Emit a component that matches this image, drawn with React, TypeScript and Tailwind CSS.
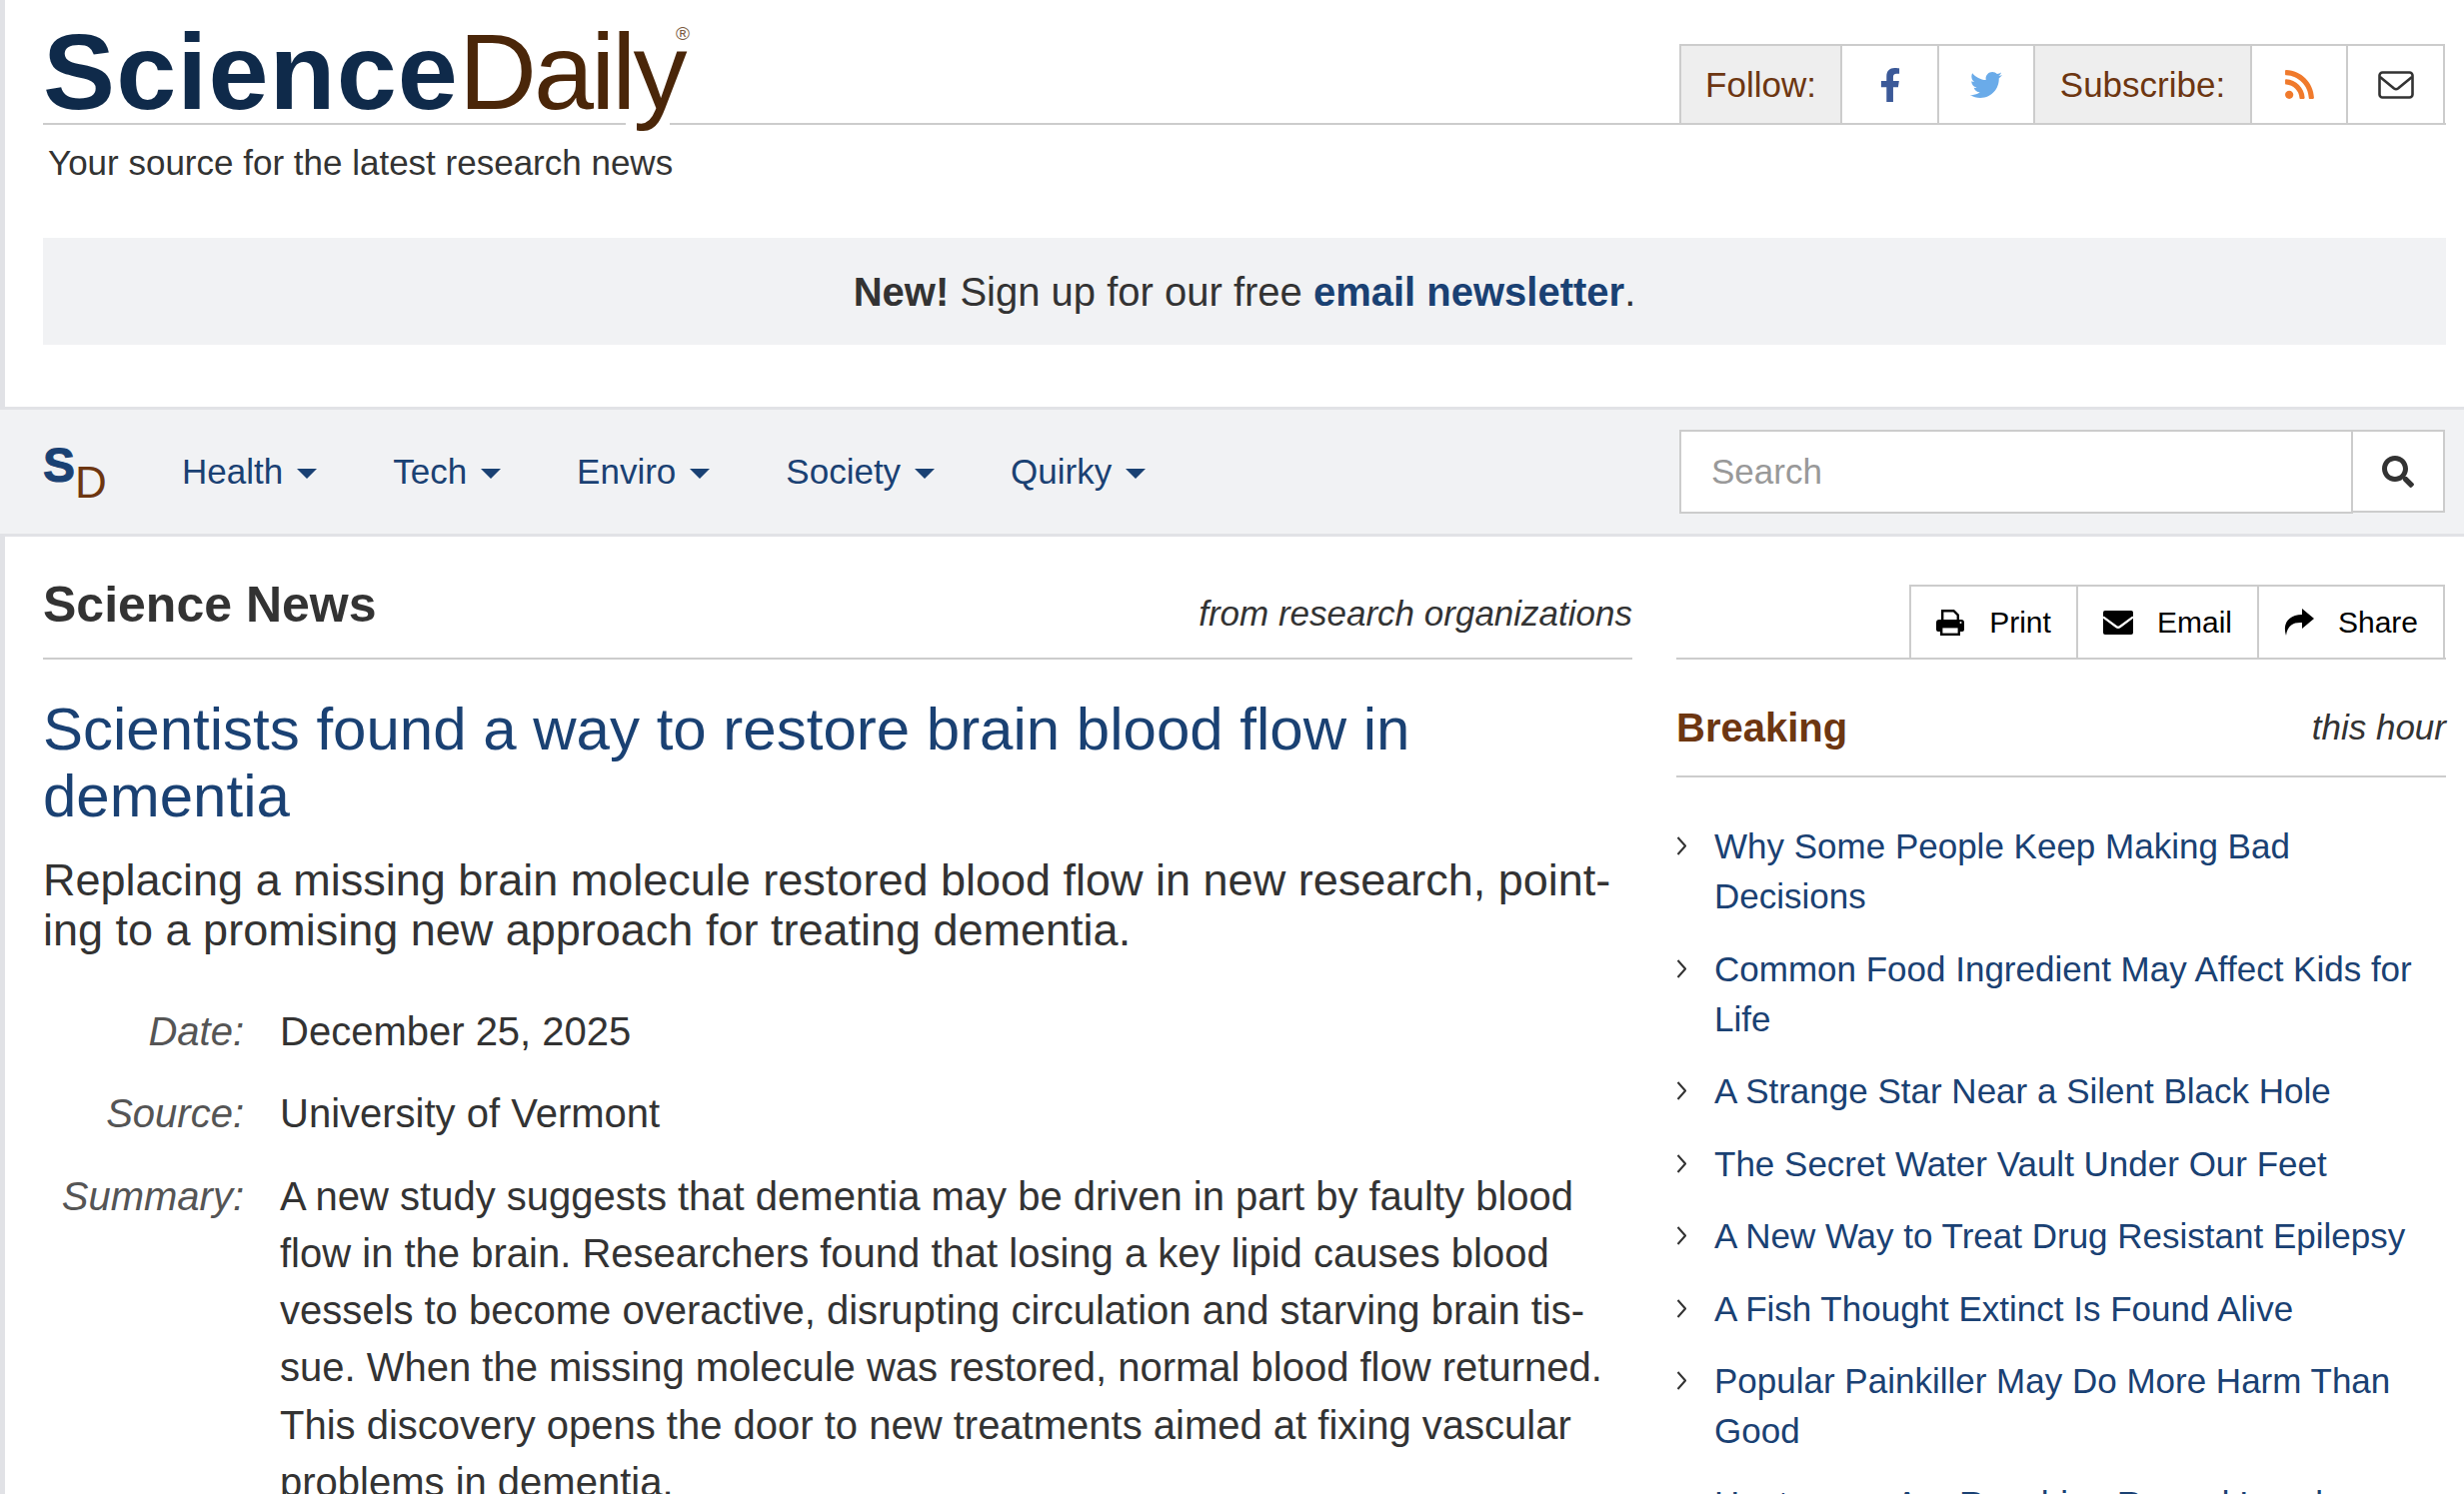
import React from "react";
import { FaFacebookF, FaTwitter, FaRss, FaSearch } from "react-icons/fa";

const navItems = ["Health", "Tech", "Enviro", "Society", "Quirky"];

const breaking = [
  "Why Some People Keep Making Bad Decisions",
  "Common Food Ingredient May Affect Kids for Life",
  "A Strange Star Near a Silent Black Hole",
  "The Secret Water Vault Under Our Feet",
  "A New Way to Treat Drug Resistant Epilepsy",
  "A Fish Thought Extinct Is Found Alive",
  "Popular Painkiller May Do More Harm Than Good",
  "Heatwaves Are Reaching Record Levels",
];

const MailOutline = () => (
  <svg viewBox="0 0 36 28" className="h-[28px] w-[36px]" fill="none" stroke="#333" strokeWidth="2.6" strokeLinejoin="round">
    <rect x="1.5" y="1.5" width="33" height="25" rx="3" />
    <path d="M2 6l14 11.5q2 1.5 4 0L34 6" />
  </svg>
);

const MailSolid = () => (
  <svg viewBox="0 0 30 24" className="h-[24px] w-[30px]">
    <rect width="30" height="24" rx="2" fill="currentColor" />
    <path d="M0 6.5l13 9.5q2 1.5 4 0l13-9.5" fill="none" stroke="#fff" strokeWidth="2.2" />
  </svg>
);

const PrintIcon = () => (
  <svg viewBox="0 0 28 26" className="h-[26px] w-[28px]">
    <path d="M6.2 11V1.2h11.3l4.3 4.3V11" fill="none" stroke="currentColor" strokeWidth="2.4" />
    <path d="M3 10h22a3 3 0 013 3v7a2 2 0 01-2 2h-2v-5H4v5H2a2 2 0 01-2-2v-7a3 3 0 013-3z" fill="currentColor" />
    <rect x="5.2" y="17.2" width="17.6" height="7.6" fill="none" stroke="currentColor" strokeWidth="2.4" />
    <circle cx="24.5" cy="13" r="1" fill="#fff" />
  </svg>
);

const ShareIcon = () => (
  <svg viewBox="0 0 30 27" className="h-[27px] w-[30px]">
    <path d="M18 0l12 10-12 10v-6C10 13.500 3.500 16 2 27-1.500 16 3 6.500 18 6z" fill="currentColor" />
  </svg>
);

const Chevron = () => (
  <svg viewBox="0 0 10 19" className="h-[19px] w-[10px]" fill="none" stroke="#333" strokeWidth="2">
    <path d="M1.500 1l7.500 8.500-7.500 8.500" />
  </svg>
);

const App = () => {
  return (
    <div className="h-[1495px] overflow-hidden bg-white font-['Liberation_Sans',Arial,sans-serif] text-[#333]">
      <div className="border-l-[5px] border-[#e1e2e6] pl-[38px] pr-[18px]">
        <header className="h-[238px]">
          <div className="flex h-[125px] items-end justify-between border-b-2 border-[#ccc]">
            <div className="relative h-[123px] w-[700px]">
              <span className="absolute bottom-[-2px] left-[583px] h-[2px] w-[44px] bg-white" />
              <div className="relative whitespace-nowrap pt-[18px] text-[108px] leading-none">
                <span className="font-bold tracking-[1.1px] text-[#0f2a4a]">Science</span>
                <span className="tracking-[-2.9px] text-[#4a2609]">Daily</span>
              </div>
              <span className="absolute left-[633px] top-[24px] text-[19px] leading-none text-[#7a5a40]">®</span>
            </div>
            <div className="mr-[1px] flex h-[79px] border-2 border-b-0 border-[#ccc] text-[35px]">
              <div className="flex w-[159px] items-center justify-center bg-[#eee] pt-[2px] text-[#6d3611]">Follow:</div>
              <div className="flex w-[97px] items-center justify-center border-l-2 border-[#ccc] text-[#3b5998]">
                <FaFacebookF className="h-[34px] w-[34px]" />
              </div>
              <div className="flex w-[96px] items-center justify-center border-l-2 border-[#ccc] text-[#6aabe9]">
                <FaTwitter className="h-[32px] w-[32px]" />
              </div>
              <div className="flex w-[217px] items-center justify-center border-l-2 border-[#ccc] bg-[#eee] pt-[2px] text-[#6d3611]">Subscribe:</div>
              <div className="flex w-[96px] items-center justify-center border-l-2 border-[#ccc] text-[#f07a2c]">
                <FaRss className="h-[33px] w-[33px]" />
              </div>
              <div className="flex w-[97px] items-center justify-center border-l-2 border-[#ccc]">
                <MailOutline />
              </div>
            </div>
          </div>
          <p className="mt-[18px] pl-[5px] text-[35px] leading-[40px] text-[#333]">Your source for the latest research news</p>
        </header>
        <div className="flex h-[107px] items-center justify-center bg-[#f1f2f4] text-[40px]">
          <span>
            <b>New!</b> Sign up for our free <b className="text-[#1a4173]">email newsletter</b>.
          </span>
        </div>
        <div className="h-[62px]" />
      </div>

      <nav className="flex h-[130px] items-center justify-between border-y-[3px] border-[#e1e2e6] bg-[#f1f2f4] pl-[43px] pr-[18px]">
        <div className="flex items-center">
          <div className="relative h-[60px] w-[139px] leading-none">
            <span className="absolute left-0 top-0 text-[48px] font-bold text-[#1a4173] [-webkit-text-stroke:1px_#1a4173]">S</span>
            <span className="absolute left-[32px] top-[19px] text-[44px] text-[#6d3611]">D</span>
          </div>
          <ul className="flex gap-[76px] text-[35px] text-[#1a4173]">
            {navItems.map((item) => (
              <li key={item} className="flex items-center gap-[14px]">
                {item}
                <span className="mt-[3px] h-0 w-0 border-x-[10px] border-t-[10px] border-x-transparent border-t-[#1a4173]" />
              </li>
            ))}
          </ul>
        </div>
        <div className="mr-[1px] flex items-start">
          <div className="flex h-[84px] w-[674px] items-center border-2 border-[#ccc] bg-white pl-[30px] text-[35px] text-[#999]">Search</div>
          <div className="flex h-[83px] w-[92px] items-center justify-center border-2 border-l-0 border-[#ccc] bg-white text-[#333]">
            <FaSearch className="h-[32px] w-[32px]" />
          </div>
        </div>
      </nav>

      <div className="border-l-[5px] border-[#e1e2e6] pl-[38px] pr-[18px]">
        <div className="flex gap-[44px]">
          <main className="w-[1590px]">
            <div className="flex h-[123px] items-end justify-between border-b-2 border-[#ccc]">
              <h2 className="mb-[23px] text-[50px] leading-[60px] font-bold text-[#333]">Science News</h2>
              <span className="mb-[18px] text-[35px] italic text-[#333]">from research organizations</span>
            </div>
            <h1 className="mt-[36px] text-[60px] leading-[67px] text-[#1a4173]">Scientists found a way to restore brain blood flow in dementia</h1>
            <p className="mt-[26px] text-[45px] leading-[50px] text-[#333]">
              Replacing a missing brain molecule restored blood flow in new research, point&shy;ing to a promising new approach for treating dementia.
            </p>
            <dl className="mt-[48px] grid grid-cols-[201px_1fr] gap-x-[36px] gap-y-[25px] text-[40px] leading-[57.25px]">
              <dt className="text-right italic text-[#555]">Date:</dt>
              <dd>December 25, 2025</dd>
              <dt className="text-right italic text-[#555]">Source:</dt>
              <dd>University of Vermont</dd>
              <dt className="text-right italic text-[#555]">Summary:</dt>
              <dd>
                A new study suggests that dementia may be driven in part by faulty blood flow in the brain. Researchers found that losing a key lipid causes blood vessels to become overactive, disrupting circulation and starving brain tis&shy;sue. When the missing molecule was restored, normal blood flow returned. This discovery opens the door to new treatments aimed at fixing vascular problems in dementia.
              </dd>
            </dl>
          </main>

          <aside className="w-[770px]">
            <div className="flex h-[123px] items-end justify-end border-b-2 border-[#ccc]">
              <div className="mr-[1px] flex h-[73px] border-2 border-b-0 border-[#ccc] text-[30px] text-black">
                <div className="flex w-[165px] items-center justify-center gap-[25px]">
                  <PrintIcon />
                  Print
                </div>
                <div className="flex w-[181px] items-center justify-center gap-[24px] border-l-2 border-[#ccc]">
                  <MailSolid />
                  Email
                </div>
                <div className="flex w-[186px] items-center justify-center gap-[24px] border-l-2 border-[#ccc]">
                  <ShareIcon />
                  Share
                </div>
              </div>
            </div>
            <div className="mt-[43px] flex h-[75px] items-start justify-between border-b-2 border-[#ccc]">
              <h3 className="text-[40px] leading-[50px] font-bold text-[#6d3611]">Breaking</h3>
              <span className="text-[35px] leading-[50px] italic">this hour</span>
            </div>
            <ul className="mt-[44px] flex flex-col gap-[22.5px] text-[35px] leading-[50px] text-[#1a4173]">
              {breaking.map((item) => (
                <li key={item} className="flex">
                  <span className="w-[38px] shrink-0 pt-[15px]">
                    <Chevron />
                  </span>
                  <span>{item}</span>
                </li>
              ))}
            </ul>
          </aside>
        </div>
      </div>
    </div>
  );
};

export default App;
